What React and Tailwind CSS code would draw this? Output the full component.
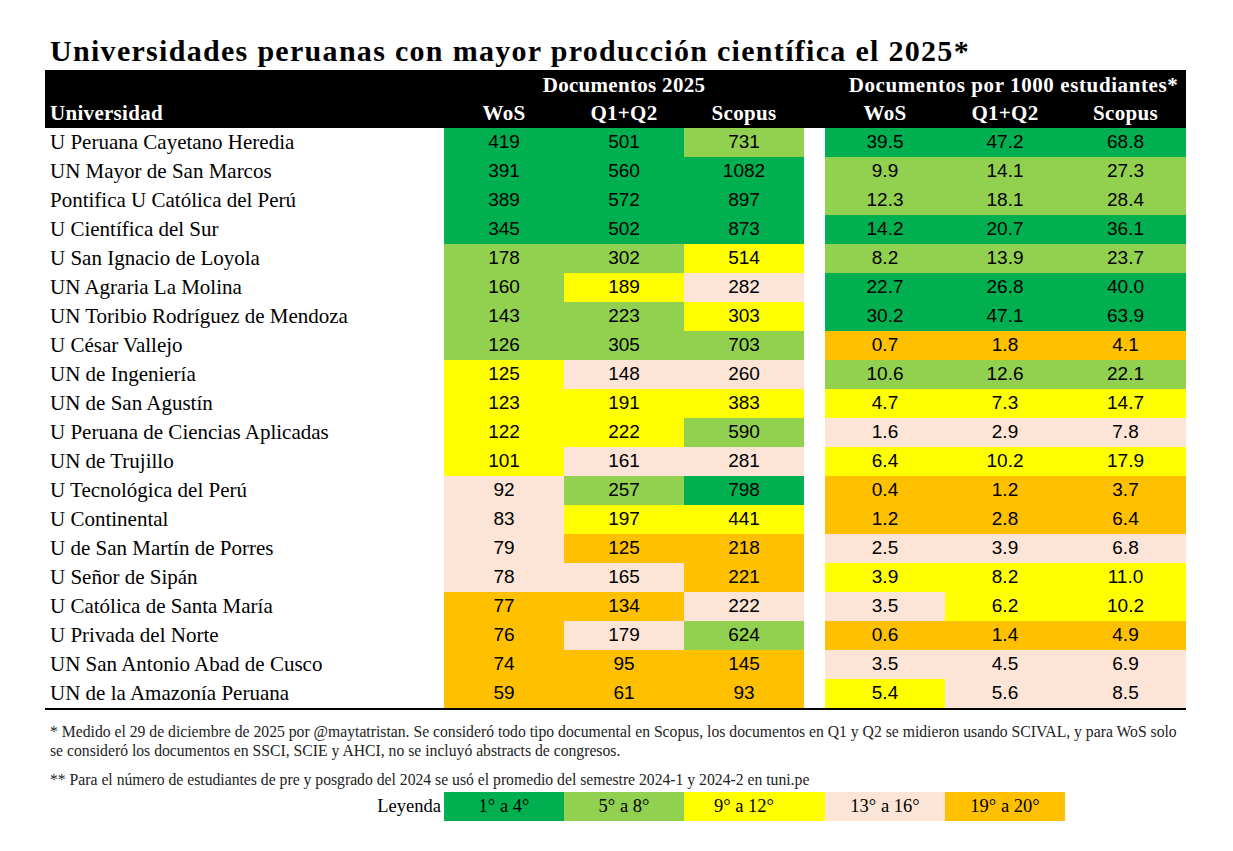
const DG = "bg-[#00b050]";
const LG = "bg-[#92d050]";
const Y = "bg-[#ffff00]";
const P = "bg-[#fce4d6]";
const O = "bg-[#ffc000]";

const C = { d: DG, l: LG, y: Y, p: P, o: O };

const rows = [
  ["U Peruana Cayetano Heredia", ["419", "d"], ["501", "d"], ["731", "l"], ["39.5", "d"], ["47.2", "d"], ["68.8", "d"]],
  ["UN Mayor de San Marcos", ["391", "d"], ["560", "d"], ["1082", "d"], ["9.9", "l"], ["14.1", "l"], ["27.3", "l"]],
  ["Pontifica U Católica del Perú", ["389", "d"], ["572", "d"], ["897", "d"], ["12.3", "l"], ["18.1", "l"], ["28.4", "l"]],
  ["U Científica del Sur", ["345", "d"], ["502", "d"], ["873", "d"], ["14.2", "d"], ["20.7", "d"], ["36.1", "d"]],
  ["U San Ignacio de Loyola", ["178", "l"], ["302", "l"], ["514", "y"], ["8.2", "l"], ["13.9", "l"], ["23.7", "l"]],
  ["UN Agraria La Molina", ["160", "l"], ["189", "y"], ["282", "p"], ["22.7", "d"], ["26.8", "d"], ["40.0", "d"]],
  ["UN Toribio Rodríguez de Mendoza", ["143", "l"], ["223", "l"], ["303", "y"], ["30.2", "d"], ["47.1", "d"], ["63.9", "d"]],
  ["U César Vallejo", ["126", "l"], ["305", "l"], ["703", "l"], ["0.7", "o"], ["1.8", "o"], ["4.1", "o"]],
  ["UN de Ingeniería", ["125", "y"], ["148", "p"], ["260", "p"], ["10.6", "l"], ["12.6", "l"], ["22.1", "l"]],
  ["UN de San Agustín", ["123", "y"], ["191", "y"], ["383", "y"], ["4.7", "y"], ["7.3", "y"], ["14.7", "y"]],
  ["U Peruana de Ciencias Aplicadas", ["122", "y"], ["222", "y"], ["590", "l"], ["1.6", "p"], ["2.9", "p"], ["7.8", "p"]],
  ["UN de Trujillo", ["101", "y"], ["161", "p"], ["281", "p"], ["6.4", "y"], ["10.2", "y"], ["17.9", "y"]],
  ["U Tecnológica del Perú", ["92", "p"], ["257", "l"], ["798", "d"], ["0.4", "o"], ["1.2", "o"], ["3.7", "o"]],
  ["U Continental", ["83", "p"], ["197", "y"], ["441", "y"], ["1.2", "o"], ["2.8", "o"], ["6.4", "o"]],
  ["U de San Martín de Porres", ["79", "p"], ["125", "o"], ["218", "o"], ["2.5", "p"], ["3.9", "p"], ["6.8", "p"]],
  ["U Señor de Sipán", ["78", "p"], ["165", "p"], ["221", "o"], ["3.9", "y"], ["8.2", "y"], ["11.0", "y"]],
  ["U Católica de Santa María", ["77", "o"], ["134", "o"], ["222", "p"], ["3.5", "p"], ["6.2", "y"], ["10.2", "y"]],
  ["U Privada del Norte", ["76", "o"], ["179", "p"], ["624", "l"], ["0.6", "o"], ["1.4", "o"], ["4.9", "o"]],
  ["UN San Antonio Abad de Cusco", ["74", "o"], ["95", "o"], ["145", "o"], ["3.5", "p"], ["4.5", "p"], ["6.9", "p"]],
  ["UN de la Amazonía Peruana", ["59", "o"], ["61", "o"], ["93", "o"], ["5.4", "y"], ["5.6", "p"], ["8.5", "p"]],
];

const grid = "grid grid-cols-[399px_120px_120px_120px_21px_120px_120px_121px]";
const serif = "font-['Liberation_Serif',serif]";
const sans = "font-['Liberation_Sans',Arial,sans-serif]";

function Num({ v, c }) {
  return (
    <div className={`${C[c]} flex items-center justify-center h-[29px] text-[19px] text-black ${sans}`}>
      {v}
    </div>
  );
}

export default function App() {
  return (
    <div className={`w-[1233px] h-[851px] bg-white pl-[45px] ${serif} text-black`}>
      <div className="h-[70px] flex items-end pl-[5px] pb-[4px]">
        <h1 className="text-[30px] font-bold leading-none tracking-[1.3px]">
          Universidades peruanas con mayor producción científica el 2025*
        </h1>
      </div>

      <div className={`${grid} w-[1141px] bg-black text-white font-bold text-[21px] leading-none tracking-[0.3px]`}>
        <div className="h-[29px]" />
        <div className="col-span-3 h-[29px] flex items-center justify-center pt-[2px]">Documentos 2025</div>
        <div />
        <div className="col-span-3 h-[29px] flex items-center justify-center pl-[16px] pt-[2px] tracking-[0.6px]">
          Documentos por 1000 estudiantes*
        </div>
        <div className="h-[29px] flex items-center pl-[5px]">Universidad</div>
        <div className="flex items-center justify-center">WoS</div>
        <div className="flex items-center justify-center">Q1+Q2</div>
        <div className="flex items-center justify-center">Scopus</div>
        <div />
        <div className="flex items-center justify-center">WoS</div>
        <div className="flex items-center justify-center">Q1+Q2</div>
        <div className="flex items-center justify-center">Scopus</div>
      </div>

      <div className="w-[1141px] border-b-2 border-black">
        {rows.map((r) => (
          <div key={r[0]} className={grid}>
            <div className="h-[29px] flex items-center pl-[5px] text-[21px]">{r[0]}</div>
            <Num v={r[1][0]} c={r[1][1]} />
            <Num v={r[2][0]} c={r[2][1]} />
            <Num v={r[3][0]} c={r[3][1]} />
            <div />
            <Num v={r[4][0]} c={r[4][1]} />
            <Num v={r[5][0]} c={r[5][1]} />
            <Num v={r[6][0]} c={r[6][1]} />
          </div>
        ))}
      </div>

      <div className="pl-[5px] pt-[12px] text-[15.7px] leading-[19px] text-[#222]">
        <p>
          * Medido el 29 de diciembre de 2025 por @maytatristan. Se consideró todo tipo documental en Scopus, los
          documentos en Q1 y Q2 se midieron usando SCIVAL, y para WoS solo
          <br />
          se consideró los documentos en SSCI, SCIE y AHCI, no se incluyó abstracts de congresos.
        </p>
        <p className="mt-[10px]">
          ** Para el número de estudiantes de pre y posgrado del 2024 se usó el promedio del semestre 2024-1 y 2024-2 en
          tuni.pe
        </p>
      </div>

      <div className="flex mt-[3px] h-[29px] text-[18.5px]">
        <div className="w-[399px] flex items-center justify-end pr-[3px]">Leyenda</div>
        <div className={`w-[120px] ${DG} flex items-center justify-center`}>1° a 4°</div>
        <div className={`w-[120px] ${LG} flex items-center justify-center`}>5° a 8°</div>
        <div className={`w-[141px] ${Y} flex items-center justify-center pr-[21px]`}>9° a 12°</div>
        <div className={`w-[120px] ${P} flex items-center justify-center`}>13° a 16°</div>
        <div className={`w-[120px] ${O} flex items-center justify-center`}>19° a 20°</div>
      </div>
    </div>
  );
}
